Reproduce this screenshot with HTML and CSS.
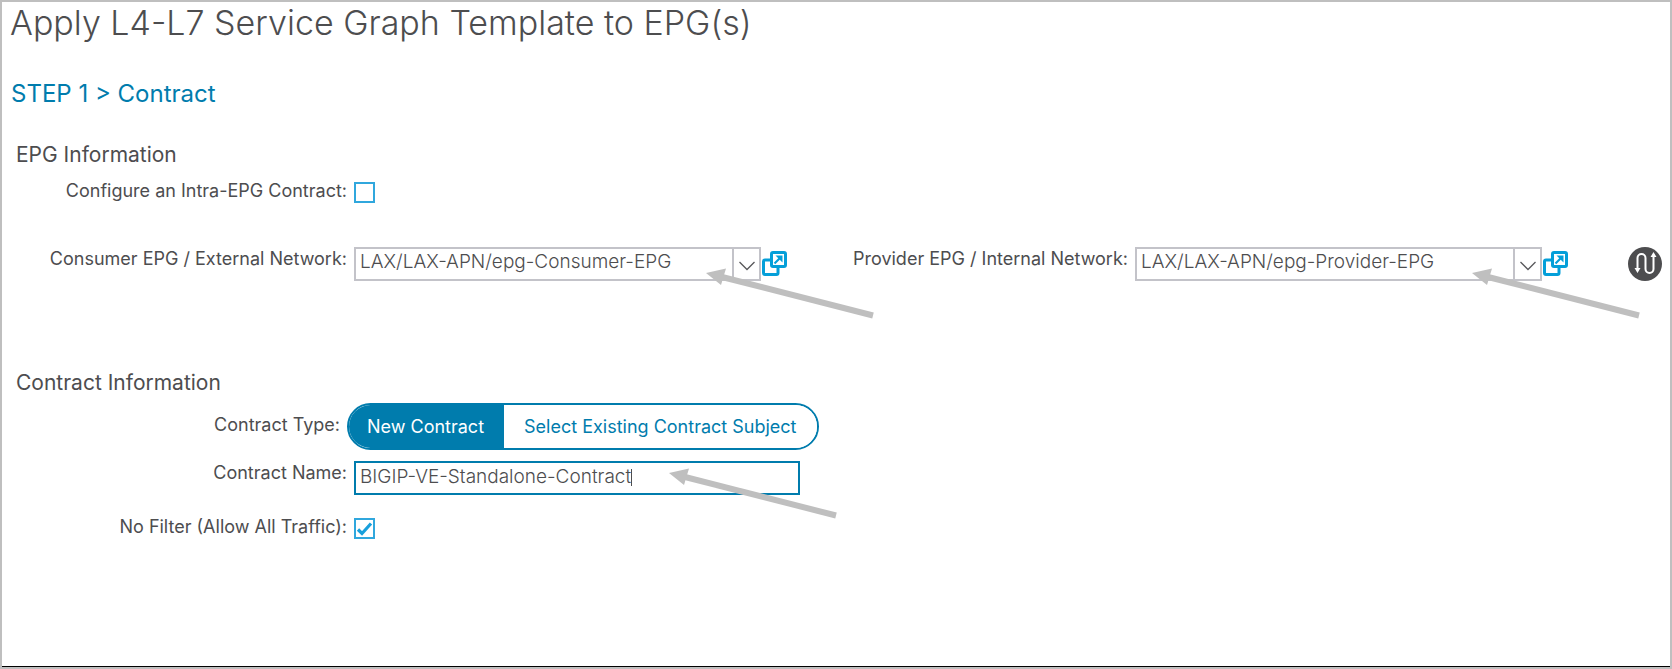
FILE: index.html
```html
<!DOCTYPE html>
<html lang="en">
<head>
<meta charset="utf-8">
<title>Apply L4-L7 Service Graph Template to EPG(s)</title>
<link rel="stylesheet" href="styles.css">
</head>
<body>
<svg class="defs" aria-hidden="true">
  <symbol id="arrow" viewBox="0 0 170 54">
    <path d="M16 9 167 47.500" fill="none" stroke="#bfbfbf" stroke-width="6"/>
    <path d="M0 5 20 .500 15 17Z" fill="#bfbfbf"/>
  </symbol>
  <symbol id="chevron" viewBox="0 0 18 12">
    <path d="M1.500 2 9 9.500 16.500 2" fill="none" stroke="#58585b" stroke-width="1.300"/>
  </symbol>
  <symbol id="popout" viewBox="0 0 25 25">
    <rect x="1.500" y="9" width="14.500" height="14.500" rx="1.500" fill="#fff" stroke="#049fd9" stroke-width="3"/>
    <rect x="9.500" y="1.500" width="14" height="14" rx="1.500" fill="#fff" stroke="#049fd9" stroke-width="3"/>
    <path d="M12.500 12.500 19 6" fill="none" stroke="#049fd9" stroke-width="2.200"/>
    <path d="M13.500 4.500H20.500V11.500Z" fill="#049fd9"/>
  </symbol>
</svg>
<main class="dialog">
  <h1 class="title">Apply L4-L7 Service Graph Template to EPG(s)</h1>
  <h2 class="step">STEP 1 &gt; Contract</h2>

  <form>
    <section>
      <h3 class="heading">EPG Information</h3>
      <div class="row row-intra">
        <label class="label" for="intra">Configure an Intra-EPG Contract:</label>
        <input class="check" type="checkbox" id="intra">
      </div>
      <div class="epgs">
        <label class="label" for="consumer">Consumer EPG / External Network:</label>
        <div class="combo">
          <select class="select" id="consumer"><option>LAX/LAX-APN/epg-Consumer-EPG</option></select>
          <span class="trigger"><svg class="chevron" aria-hidden="true"><use href="#chevron"/></svg></span>
          <svg class="arrow" aria-hidden="true"><use href="#arrow"/></svg>
        </div>
        <button class="open" type="button" aria-label="Open consumer EPG"><svg class="popout"><use href="#popout"/></svg></button>
        <label class="label" for="provider">Provider EPG / Internal Network:</label>
        <div class="combo">
          <select class="select" id="provider"><option>LAX/LAX-APN/epg-Provider-EPG</option></select>
          <span class="trigger"><svg class="chevron" aria-hidden="true"><use href="#chevron"/></svg></span>
          <svg class="arrow arrow-provider" aria-hidden="true"><use href="#arrow"/></svg>
        </div>
        <button class="open" type="button" aria-label="Open provider EPG"><svg class="popout"><use href="#popout"/></svg></button>
        <button class="swap" type="button" aria-label="Swap EPGs">
          <svg class="swap-icon" viewBox="0 0 34 34">
            <circle cx="17" cy="17" r="17" fill="#4d4d4f"/>
            <path d="M9.500 23V11a4 4 0 0 1 8 0v11a4 4 0 0 0 8 0V10" fill="none" stroke="#fff" stroke-width="2"/>
            <path d="M6.500 21H12.500L9.500 26ZM22.500 10H28.500L25.500 5Z" fill="#fff"/>
          </svg>
        </button>
      </div>
    </section>

    <section>
      <h3 class="heading">Contract Information</h3>
      <div class="row row-type">
        <span class="label" id="type-label">Contract Type:</span>
        <div class="segments" role="group" aria-labelledby="type-label">
          <button class="segment segment-on" type="button" aria-pressed="true">New Contract</button>
          <button class="segment" type="button" aria-pressed="false">Select Existing Contract Subject</button>
        </div>
      </div>
      <div class="row row-name">
        <label class="label" for="name">Contract Name:</label>
        <div class="name-field">
          <input class="text" type="text" id="name" value="BIGIP-VE-Standalone-Contract">
          <span class="caret"></span>
          <svg class="arrow arrow-name" aria-hidden="true"><use href="#arrow"/></svg>
        </div>
      </div>
      <div class="row row-filter">
        <label class="label" for="filter">No Filter (Allow All Traffic):</label>
        <input class="check" type="checkbox" id="filter" checked>
      </div>
    </section>
  </form>
</main>
</body>
</html>
```
FILE: styles.css
```css
* { box-sizing: border-box; }

body {
  margin: 0;
  background: #fff;
  color: #4d4d4f;
  font-family: Inter, "Liberation Sans", sans-serif;
  font-size: 18px;
  font-weight: 400;
}

button, input, select { font: inherit; color: inherit; }

.defs { position: absolute; width: 0; height: 0; }

.dialog {
  min-height: 100vh;
  border: 2px solid #bfbfbf;
  box-shadow: inset 0 -1px #000;
}

h1, h2, h3 { margin: 0; font-weight: 400; }

.title { padding: 1px 0 0 8px; font-size: 34px; line-height: 40px; font-weight: 300; }

.step {
  padding: 37px 0 0 9px;
  color: #007cad;
  font-size: 24px;
  line-height: 28px;
}

.heading {
  padding: 33px 0 0 14px;
  font-size: 21px;
  line-height: 28px;
}

.row { display: grid; grid-template-columns: 352px 1fr; align-items: start; }
.label { padding-right: 7px; text-align: right; line-height: 24px; white-space: nowrap; }

.row-intra { padding-top: 10px; }

.check {
  appearance: none;
  width: 21px;
  height: 21px;
  margin: 3px 0 0;
  border: 2px solid #30a7dd;
  background: #fff;
}
.check:checked {
  background: #fff url("data:image/svg+xml,%3Csvg xmlns='http://www.w3.org/2000/svg' viewBox='0 0 17 17'%3E%3Cpath d='M2 9.500 6 13.500 15 3.500' fill='none' stroke='%2318a0dc' stroke-width='3.200'/%3E%3C/svg%3E");
}

.epgs {
  display: grid;
  grid-template-columns: 352px minmax(0, 1fr) 26px 348px minmax(0, 1fr) 26px 102px;
  align-items: start;
  padding-top: 44px;
}

.combo, .name-field { position: relative; }
.combo { display: flex; }

.select {
  appearance: none;
  flex: 1;
  min-width: 0;
  height: 34px;
  padding: 0 30px 6px 4px;
  border: 2px solid #c3c3c9;
  border-radius: 0;
  background: #fff;
  font-size: 19px;
  font-weight: 300;
}

.trigger {
  position: absolute;
  top: 2px;
  right: 2px;
  bottom: 2px;
  display: flex;
  align-items: center;
  justify-content: center;
  width: 27px;
  padding-top: 3px;
  border-left: 2px solid #c3c3c9;
  pointer-events: none;
}
.chevron { width: 18px; height: 12px; }

.open, .swap { padding: 0; border: 0; background: none; }
.open { padding: 4px 0 0 1px; }
.swap { justify-self: end; margin-right: 8px; }
.popout { display: block; width: 25px; height: 25px; }
.swap-icon { display: block; width: 34px; height: 34px; }

.arrow {
  position: absolute;
  z-index: 1;
  top: 21px;
  right: -115px;
  width: 170px;
  height: 54px;
  pointer-events: none;
}
.arrow-provider { right: -100px; }
.arrow-name { top: 7px; right: -39px; }

section + section { padding-top: 55px; }

.row-type { grid-template-columns: 345px 1fr; padding-top: 6px; }
.row-type .label { padding-top: 10px; }

.segments {
  display: flex;
  justify-self: start;
  border: 2px solid #007cad;
  border-radius: 24px;
  overflow: hidden;
}
.segment {
  height: 43px;
  padding: 0 20px;
  border: 0;
  background: #fff;
  color: #007cad;
  white-space: nowrap;
}
.segment-on { padding-left: 18px; background: #007cad; color: #fff; }

.row-name { padding-top: 11px; }
.name-field { display: flex; width: 100%; max-width: 446px; }
.text {
  width: 100%;
  height: 34px;
  padding: 0 4px 4px;
  border: 2px solid #007cad;
  outline: none;
  background: #fff;
  font-size: 19px;
  font-weight: 300;
}
.caret {
  position: absolute;
  top: 8px;
  left: 277px;
  width: 1px;
  height: 17px;
  background: #4d4d4f;
}

.row-filter { padding-top: 20px; }
```
